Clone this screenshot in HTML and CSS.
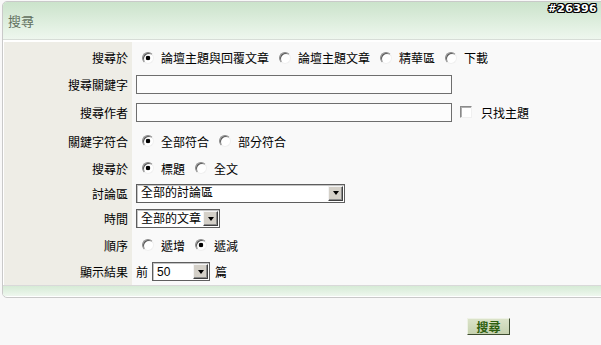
FILE: index.html
```html
<!DOCTYPE html>
<html lang="zh-Hant">
<head>
  <meta charset="UTF-8">
  <meta name="viewport" content="width=device-width, initial-scale=1.0">
  <title>搜尋</title>
  <link rel="stylesheet" href="styles.css">
</head>
<body>
  <div class="panel">
    <div class="panel-head">
      <div class="topic-no">#26396</div>
      <div class="panel-title">搜尋</div>
    </div>
    <form class="search-form">
      <div class="lbl r1">搜尋於</div>
      <div class="val r1">
        <label class="opt"><input type="radio" name="area" checked>論壇主題與回覆文章</label>
        <label class="opt"><input type="radio" name="area">論壇主題文章</label>
        <label class="opt"><input type="radio" name="area">精華區</label>
        <label class="opt"><input type="radio" name="area">下載</label>
      </div>

      <div class="lbl">搜尋關鍵字</div>
      <div class="val"><input type="text" class="txt"></div>

      <div class="lbl">搜尋作者</div>
      <div class="val">
        <input type="text" class="txt">
        <label class="opt chk"><input type="checkbox">只找主題</label>
      </div>

      <div class="lbl">關鍵字符合</div>
      <div class="val">
        <label class="opt"><input type="radio" name="match" checked>全部符合</label>
        <label class="opt"><input type="radio" name="match">部分符合</label>
      </div>

      <div class="lbl">搜尋於</div>
      <div class="val">
        <label class="opt"><input type="radio" name="field" checked>標題</label>
        <label class="opt"><input type="radio" name="field">全文</label>
      </div>

      <div class="lbl">討論區</div>
      <div class="val">
        <label class="sel sel-forum">
          <select><option>全部的討論區</option></select>
          <span class="sel-btn"></span>
        </label>
      </div>

      <div class="lbl">時間</div>
      <div class="val">
        <label class="sel sel-time">
          <select><option>全部的文章</option></select>
          <span class="sel-btn"></span>
        </label>
      </div>

      <div class="lbl">順序</div>
      <div class="val">
        <label class="opt"><input type="radio" name="order">遞增</label>
        <label class="opt"><input type="radio" name="order" checked>遞減</label>
      </div>

      <div class="lbl">顯示結果</div>
      <div class="val">
        <span>前</span>
        <label class="sel sel-count">
          <select><option>50</option></select>
          <span class="sel-btn"></span>
        </label>
        <span class="unit">篇</span>
      </div>
    </form>
    <div class="panel-foot"></div>
  </div>
  <div class="actions">
    <button type="button" class="btn">搜尋</button>
  </div>
</body>
</html>
```

FILE: styles.css
```css
body {
    margin: 0;
    padding: 0;
    overflow: hidden;
    background-color: #f8f8f8;
    font-family: "Liberation Sans", "Noto Sans CJK TC", sans-serif;
    font-size: 12px;
    color: #000;
}
.panel {
    margin: 1px -6px 0 2px;
    border: 1px solid #c9c9c9;
    border-radius: 5px;
    background-color: #fff;
    padding-bottom: 1px;
    overflow: hidden;
}
.panel-head {
    height: 37px;
    border-bottom: 1px solid #d7ddd7;
    background: linear-gradient(#cbe3cb, #eef7ee);
}
.topic-no {
    padding: 1px 9px 0 0;
    text-align: right;
    font-family: "DejaVu Sans", sans-serif;
    font-weight: bold;
    font-size: 11px;
    letter-spacing: 0.3px;
    line-height: 12px;
    color: #fff;
    text-shadow: 1px 0 0 #000, -1px 0 0 #000, 0 1px 0 #000, 0 -1px 0 #000,
        1px 1px 0 #000, -1px -1px 0 #000, 1px -1px 0 #000, -1px 1px 0 #000;
}
.panel-title {
    padding-left: 5px;
    font-size: 13px;
    line-height: 14px;
    color: #62715f;
}
.search-form {
    display: grid;
    grid-template-columns: 128px 1fr;
    grid-template-rows: 29px 26px 30px 28px 26px 24px 27px 26px 27px;
    margin: 2px 0 0 1px;
    background-color: #f9f9f9;
}
.lbl {
    display: flex;
    align-items: center;
    justify-content: flex-end;
    padding-right: 4px;
    background-color: #eeede6;
}
.val {
    display: flex;
    align-items: center;
    padding-left: 4px;
}
.r1 {
    padding-top: 2px;
}
.opt {
    display: inline-flex;
    align-items: center;
    margin-right: 4px;
}
.opt input {
    -webkit-appearance: none;
    appearance: none;
    width: 12px;
    height: 12px;
    margin: 0 7px 0 6px;
    border: 1px solid;
    border-color: #8a8a8a #f0f0f0 #f0f0f0 #8a8a8a;
    border-radius: 50%;
    background-color: #fff;
    box-shadow: inset 1px 1px 0 #5a5a5a;
}
.opt input:checked {
    background: radial-gradient(circle, #000 0 2px, #fff 2.6px);
}
.opt input[type="checkbox"] {
    border-radius: 0;
    width: 12px;
    height: 12px;
    box-shadow: inset 1px 1px 0 #b0b0b0;
}
.chk input {
    margin: 0 9px 0 8px;
}
.txt {
    box-sizing: border-box;
    width: 316px;
    height: 19px;
    margin: 0;
    border: 1px solid #6e6e6e;
    background-color: #fcfcfc;
    font-size: 12px;
}
.sel {
    box-sizing: border-box;
    display: inline-flex;
    align-items: stretch;
    height: 19px;
    border: 1px solid #5e5e5e;
    background-color: #fff;
    box-shadow: inset 1px 1px 0 #c4c4c4;
}
.sel select {
    -webkit-appearance: none;
    appearance: none;
    flex: 1;
    min-width: 0;
    margin: 0;
    padding: 0 0 0 4px;
    border: 0;
    background: transparent;
    font-family: "Liberation Sans", "Noto Sans CJK TC", sans-serif;
    font-size: 12px;
    color: #000;
}
.sel-btn {
    display: flex;
    align-items: center;
    justify-content: center;
    width: 13px;
    margin: 1px;
    border: 1px solid;
    border-color: #f4f4f4 #404040 #404040 #f4f4f4;
    background-color: #d4d0c8;
    box-shadow: inset -1px -1px 0 #8c8c8c;
}
.sel-btn::after {
    content: "";
    border-left: 3.5px solid transparent;
    border-right: 3.5px solid transparent;
    border-top: 4px solid #000;
}
.sel-forum {
    width: 209px;
}
.sel-time {
    width: 84px;
}
.sel-count {
    width: 58px;
    margin-left: 4px;
}
.unit {
    margin-left: 5px;
}
.panel-foot {
    height: 10px;
    border-top: 1px solid #d9d9d9;
    background: linear-gradient(#d6ebd6, #eef7ee);
}
.actions {
    display: flex;
    justify-content: flex-end;
    padding: 20px 91px 0 0;
}
.btn {
    width: 43px;
    height: 17px;
    padding: 0;
    border: 1px solid;
    border-color: #eef2e6 #3d4b30 #3d4b30 #eef2e6;
    background: linear-gradient(#dbe3c9, #c6d2b0);
    color: #2f6010;
    font-family: "Noto Sans CJK TC", sans-serif;
    font-size: 12px;
    font-weight: bold;
    line-height: 14px;
}
```
